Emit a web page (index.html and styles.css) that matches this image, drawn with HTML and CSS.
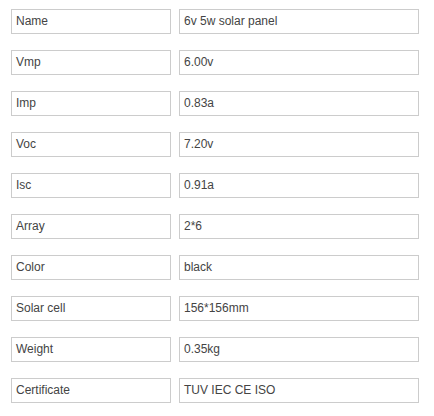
FILE: index.html
```html
<!DOCTYPE html>
<html>
<head>
<meta charset="utf-8">
<link rel="stylesheet" href="styles.css">
</head>
<body>
<div class="spec">
  <div class="row"><div class="cell key">Name</div><div class="cell val">6v 5w solar panel</div></div>
  <div class="row"><div class="cell key">Vmp</div><div class="cell val">6.00v</div></div>
  <div class="row"><div class="cell key">Imp</div><div class="cell val">0.83a</div></div>
  <div class="row"><div class="cell key">Voc</div><div class="cell val">7.20v</div></div>
  <div class="row"><div class="cell key">Isc</div><div class="cell val">0.91a</div></div>
  <div class="row"><div class="cell key">Array</div><div class="cell val">2*6</div></div>
  <div class="row"><div class="cell key">Color</div><div class="cell val">black</div></div>
  <div class="row"><div class="cell key">Solar cell</div><div class="cell val">156*156mm</div></div>
  <div class="row"><div class="cell key">Weight</div><div class="cell val">0.35kg</div></div>
  <div class="row"><div class="cell key">Certificate</div><div class="cell val">TUV IEC CE ISO</div></div>
</div>
</body>
</html>
```
FILE: styles.css
```css
html, body {
  margin: 0;
  padding: 0;
  background: #fff;
}
.spec {
  display: flex;
  flex-direction: column;
  gap: 16px;
  padding: 9px 0 0 11px;
  font-family: "Liberation Sans", Arial, sans-serif;
  font-size: 12px;
  color: #444;
}
.row {
  display: flex;
  gap: 8px;
}
.cell {
  box-sizing: border-box;
  height: 25px;
  border: 1px solid #ccc;
  padding: 0 4px;
  line-height: 23px;
  white-space: nowrap;
}
.key { width: 160px; }
.val { width: 240px; }
```
